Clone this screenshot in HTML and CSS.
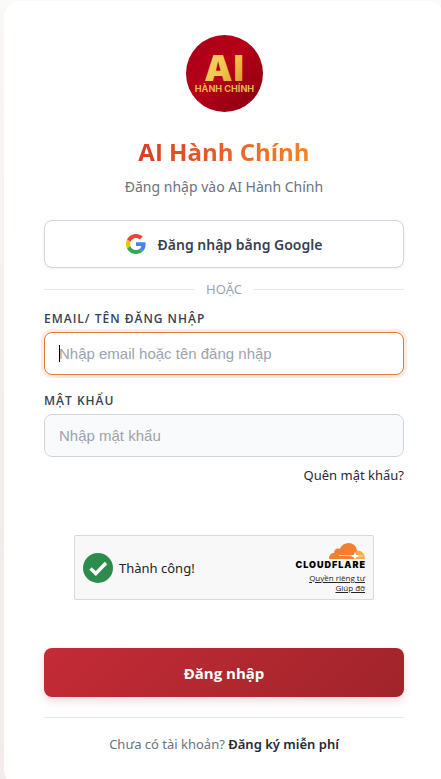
FILE: index.html
```html
<!DOCTYPE html>
<html lang="vi">
<head>
<meta charset="utf-8">
<meta name="viewport" content="width=device-width, initial-scale=1">
<title>AI Hành Chính</title>
<link rel="stylesheet" href="styles.css">
</head>
<body>
<main class="card">
  <header class="brand">
    <svg class="brand-logo" viewBox="0 0 76 76" role="img" aria-label="AI Hành Chính">
      <defs>
        <linearGradient id="red" x1="0" y1="0" x2="1" y2="1">
          <stop offset="0" stop-color="#a90016"/><stop offset=".45" stop-color="#b50018"/><stop offset="1" stop-color="#86000f"/>
        </linearGradient>
        <linearGradient id="gold" x1="0" y1="0" x2="1" y2="1">
          <stop offset="0" stop-color="#f8da68"/><stop offset=".5" stop-color="#efc64d"/><stop offset="1" stop-color="#cf962c"/>
        </linearGradient>
      </defs>
      <circle cx="38" cy="38" r="38" fill="url(#red)"/>
      <text class="logo-big" x="38" y="45" text-anchor="middle" fill="url(#gold)">AI</text>
      <text class="logo-small" x="38" y="56" text-anchor="middle" fill="#efb54d">HÀNH CHÍNH</text>
    </svg>
    <h1 class="title">AI Hành Chính</h1>
    <p class="subtitle">Đăng nhập vào AI Hành Chính</p>
  </header>

  <button class="google" type="button">
    <svg class="google-icon" viewBox="0 0 48 48" aria-hidden="true">
      <path fill="#EA4335" d="M24 9.5c3.54 0 6.71 1.22 9.21 3.6l6.85-6.85C35.9 2.38 30.47 0 24 0 14.62 0 6.51 5.38 2.56 13.22l7.98 6.19C12.43 13.72 17.74 9.5 24 9.5z"/>
      <path fill="#4285F4" d="M46.98 24.55c0-1.57-.15-3.09-.38-4.55H24v9.02h12.94c-.58 2.96-2.26 5.48-4.78 7.18l7.73 6c4.51-4.18 7.09-10.36 7.09-17.65z"/>
      <path fill="#FBBC05" d="M10.53 28.59c-.48-1.45-.76-2.99-.76-4.59s.27-3.14.76-4.59l-7.98-6.19C.92 16.46 0 20.12 0 24c0 3.88.92 7.54 2.56 10.78l7.97-6.19z"/>
      <path fill="#34A853" d="M24 48c6.48 0 11.93-2.13 15.89-5.81l-7.73-6c-2.15 1.45-4.92 2.3-8.16 2.3-6.26 0-11.57-4.22-13.47-9.91l-7.98 6.19C6.51 42.62 14.62 48 24 48z"/>
    </svg>
    <span>Đăng nhập bằng Google</span>
  </button>

  <div class="divider"><span>HOẶC</span></div>

  <form class="form">
    <div class="field active">
      <label for="email">EMAIL/ TÊN ĐĂNG NHẬP</label>
      <div class="control"><input id="email" type="text" placeholder="Nhập email hoặc tên đăng nhập"></div>
    </div>
    <div class="field">
      <label for="password">MẬT KHẨU</label>
      <div class="control"><input id="password" type="password" placeholder="Nhập mật khẩu"></div>
    </div>
    <a class="forgot" href="#">Quên mật khẩu?</a>

    <div class="captcha">
      <svg class="check" viewBox="0 0 30 30" aria-hidden="true">
        <circle cx="15" cy="15" r="15" fill="#2d8c4b"/>
        <path d="M7.500 15.500 12.800 20.500 23 10" fill="none" stroke="#fff" stroke-width="3.400"/>
      </svg>
      <span class="captcha-state">Thành công!</span>
      <div class="captcha-brand">
        <svg class="cloud" viewBox="0 0 74 27" role="img" aria-label="Cloudflare">
          <path fill="#f4802f" d="M38 16c0-3.500 2-6 5.200-6.200C42.800 6.500 46 4.600 48.600 6 50.500 2 54 0 57.500 0c4.500 0 7.800 3 8.500 7.300l.8 3L63 16z"/>
          <path fill="#faae40" d="M65.800 7.500C70.500 6.800 74 10.500 74 16H62l2-4z"/>
          <path d="M48 12.500h14.500M65 13h7" stroke="#fbd9ba" stroke-width="1.200"/>
          <path fill="#fff" d="m64 8.500 1.200 3.200 3.300 1.300-3.300 1.200L64 16l-1.200-1.800-3.300-1.200 3.300-1.300z"/>
          <text class="cloud-name" x="75" y="25" text-anchor="end">CLOUDFLARE</text>
        </svg>
        <a href="#">Quyền riêng tư</a>
        <a href="#">Giúp đỡ</a>
      </div>
    </div>

    <button class="submit" type="submit">Đăng nhập</button>
  </form>

  <footer class="signup">Chưa có tài khoản? <a href="#">Đăng ký miễn phí</a></footer>
</main>
</body>
</html>
```
FILE: styles.css
```css
* { box-sizing: border-box; }

html { overflow: hidden; }

body {
  margin: 0;
  min-height: 100vh;
  overflow: hidden;
  background: linear-gradient(180deg, #fdfafa 0%, #f4f1ef 50%, #f6eeee 100%);
  font-family: "Noto Sans", "Open Sans", sans-serif;
  color: #374151;
}

.card {
  margin: 1px -3px 0 4px;
  padding: 34px 40px 32px;
  background: #fff;
  border-radius: 16px;
  box-shadow: 0 4px 24px rgba(0, 0, 0, .03);
}

.brand {
  display: flex;
  flex-direction: column;
  align-items: center;
  text-align: center;
}

.brand-logo { width: 77px; height: 77px; }
.logo-big { font: 900 35px Inter, sans-serif; letter-spacing: 1px; }
.logo-small { font: 700 9px Inter, sans-serif; }

.title {
  margin: 22px 0 0;
  font: 700 24px/36px "Open Sans", sans-serif;
  color: transparent;
  background: linear-gradient(90deg, #dc3b2a, #f58426);
  background-clip: text;
  -webkit-background-clip: text;
}

.subtitle {
  margin: 6px 0 0;
  font-size: 14px;
  line-height: 22px;
  color: #6b7280;
}

.google {
  display: flex;
  align-items: center;
  justify-content: center;
  gap: 12px;
  width: 100%;
  height: 48px;
  margin-top: 22px;
  border: 1px solid #d1d5db;
  border-radius: 8px;
  background: #fff;
  box-shadow: 0 1px 3px rgba(0, 0, 0, .06);
  font: 600 14px "Noto Sans", "Open Sans", sans-serif;
  color: #374151;
}
.google-icon { width: 20px; height: 20px; }

.divider {
  display: flex;
  align-items: center;
  gap: 12px;
  margin-top: 12px;
  font-size: 13px;
  line-height: 18px;
  color: #9ca3af;
}
.divider::before,
.divider::after {
  content: "";
  flex: 1;
  height: 1px;
  background: #e5e7eb;
}

.form { display: flex; flex-direction: column; }

.field { margin-top: 17px; }
.field.active { margin-top: 12px; }

.field label {
  display: block;
  margin-bottom: 4px;
  font: 600 12px/18px "Open Sans", sans-serif;
  letter-spacing: 1px;
  color: #374151;
}

.control { position: relative; }

.field input {
  display: block;
  width: 100%;
  height: 43px;
  padding: 0 14px;
  border: 1px solid #d1d5db;
  border-radius: 8px;
  background: #f9fafb;
  font: 15px "Liberation Sans", Arial, sans-serif;
  color: #111827;
  outline: 0;
}
.field input::placeholder { color: #9ca3af; opacity: 1; }

.field.active input {
  border-color: #e57a3c;
  background: #fff;
  box-shadow: 0 0 0 3px #fdebe2;
}

.field.active .control::after {
  content: "";
  position: absolute;
  left: 15px;
  top: 13px;
  width: 1px;
  height: 17px;
  background: #000;
}

.forgot {
  align-self: flex-end;
  margin-top: 8px;
  font-size: 13px;
  line-height: 20px;
  color: #1f2937;
  text-decoration: none;
}

.captcha {
  display: flex;
  align-items: center;
  align-self: center;
  width: 300px;
  height: 65px;
  margin-top: 50px;
  padding: 0 8px;
  border: 1px solid #d9d9d9;
  border-radius: 2px;
  background: #f8f8f8;
  color: #232323;
}
.check { width: 30px; height: 30px; }
.captcha-state { margin-left: 6px; font-size: 13px; color: #232323; }

.captcha-brand {
  display: flex;
  flex-direction: column;
  align-items: flex-end;
  margin-left: auto;
}
.captcha-brand a { font: 8px/10px "Open Sans", sans-serif; color: #232323; }
.cloud { width: 74px; height: 27px; margin-bottom: 3px; overflow: visible; }
.cloud-name { font: 900 9px Inter, sans-serif; letter-spacing: 1px; fill: #000; }

.submit {
  width: 100%;
  height: 49px;
  margin-top: 48px;
  border: 0;
  border-radius: 8px;
  background: linear-gradient(135deg, #c42b36, #a1242b);
  box-shadow: 0 4px 8px rgba(196, 43, 54, .18);
  font: 700 15px "Open Sans", sans-serif;
  color: #fff;
}

.signup {
  margin-top: 20px;
  padding-top: 16px;
  border-top: 1px solid #e5e7eb;
  font-size: 13px;
  line-height: 20px;
  text-align: center;
  color: #6b7280;
}
.signup a { font-weight: 600; color: #1f2937; text-decoration: none; }
```
